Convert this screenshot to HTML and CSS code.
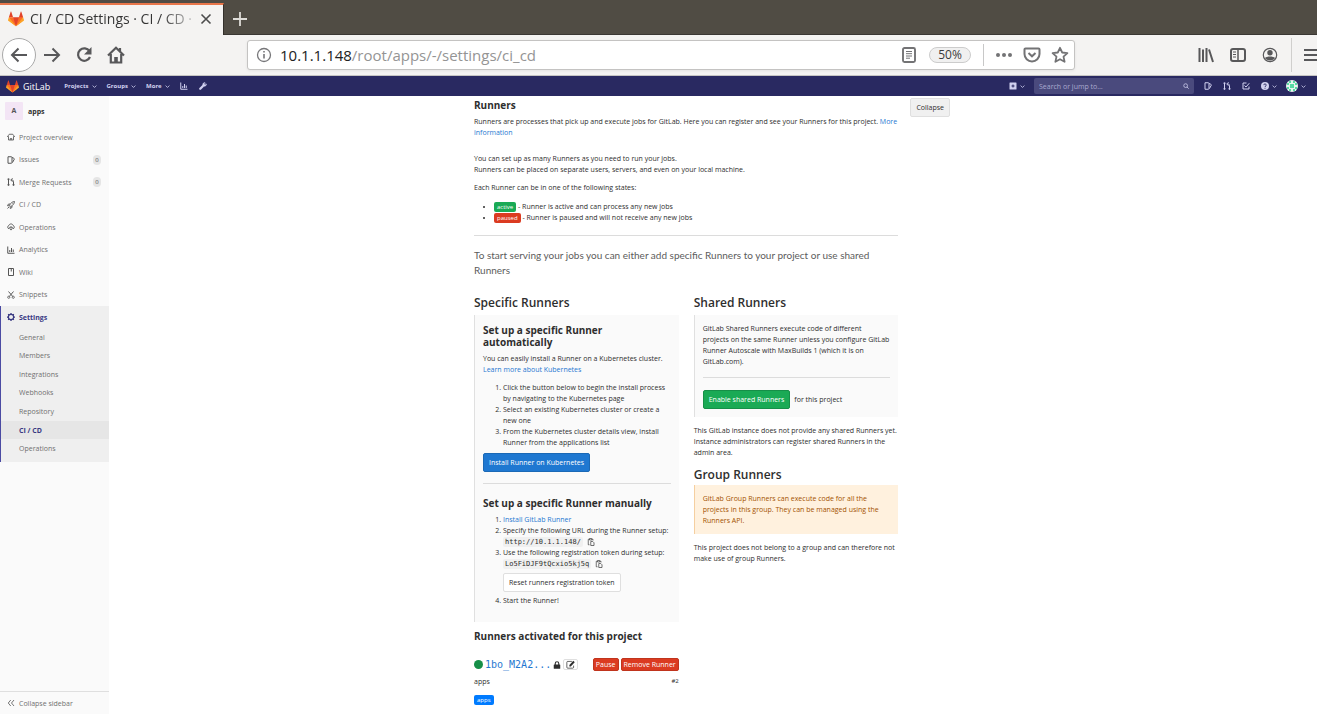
FILE: index.html
```html
<!DOCTYPE html>
<html lang="en">
<head>
<meta charset="utf-8">
<title>CI / CD Settings · CI / CD · GitLab</title>
<link rel="stylesheet" href="styles.css">
</head>
<body>
<svg class="sprite" aria-hidden="true">
  <symbol id="tanuki" viewBox="0 0 36 36">
    <path fill="#e24329" d="M2 14l9.38 9v-9l-4-12.28c-.2-.63-1.18-.63-1.38 0zM34 14l-9.38 9v-9l4-12.28c.2-.63 1.18-.63 1.38 0zM18 34.38L3 14h30z"/>
    <path fill="#fc6d26" d="M18 34.38L11.38 14H2l4 11zM18 34.38L24.62 14H34l-4 11z"/>
    <path fill="#fca326" d="M2 14L.1 20.16c-.18.56 0 1.2.5 1.56L18 34.38zM34 14l1.9 6.16c.18.56 0 1.2-.5 1.56L18 34.38z"/>
  </symbol>
  <symbol id="chevron" viewBox="0 0 16 16"><path d="M2 5l6 6 6-6" fill="none" stroke="currentColor" stroke-width="2.6"/></symbol>
  <symbol id="chart" viewBox="0 0 16 16"><path d="M1.500 1v13.500H15M5.500 12V8M9 12V4M12.500 12V7" fill="none" stroke="currentColor" stroke-width="2"/></symbol>
  <symbol id="wrench" viewBox="0 0 16 16"><path d="M2.500 13.500l6-6" fill="none" stroke="currentColor" stroke-width="4.500" stroke-linecap="round"/><path d="M13.500 2.500l-2.500 2.500M7.500 5.500C7.500 2.500 9.500 1 12 1l-2 3 2 2 3-2c0 2.500-1.500 4.500-4.500 4.500z" fill="currentColor" stroke="currentColor" stroke-width="1"/></symbol>
  <symbol id="search" viewBox="0 0 16 16"><circle cx="7" cy="7" r="5" fill="none" stroke="currentColor" stroke-width="2"/><path d="M11 11l4 4" stroke="currentColor" stroke-width="2.400"/></symbol>
  <symbol id="issues" viewBox="0 0 16 16"><path d="M2 1.500h6.500a1.500 1.500 0 0 1 1.500 1.500v10a1.500 1.500 0 0 1-1.500 1.500H2zM10 3l3.500 1.500c1 .5 1.300 1 1 2L11 13" fill="none" stroke="currentColor" stroke-width="2"/></symbol>
  <symbol id="merge" viewBox="0 0 16 16"><path d="M3 3v12M13 15V7c0-2-1-3-4-3M11 .5L7.500 4 11 7.500" fill="none" stroke="currentColor" stroke-width="2"/><circle cx="3" cy="2.500" r="2" fill="currentColor"/><circle cx="3" cy="13.500" r="2" fill="currentColor"/><circle cx="13" cy="13.500" r="2" fill="currentColor"/></symbol>
  <symbol id="todo" viewBox="0 0 16 16"><path d="M9 2H2v12h12V9M5 7l3 3 6.500-7.500" fill="none" stroke="currentColor" stroke-width="2"/></symbol>
  <symbol id="help" viewBox="0 0 16 16"><circle cx="8" cy="8" r="8" fill="currentColor"/><path d="M5.500 6.200C5.500 3 10.500 3 10.500 6.200 10.500 8 8 8 8 10M8 11.500v2" fill="none" stroke="#292961" stroke-width="1.800"/></symbol>
  <symbol id="plus-square" viewBox="0 0 16 16"><path fill="currentColor" fill-rule="evenodd" d="M2 1h12a1 1 0 0 1 1 1v12a1 1 0 0 1-1 1H2a1 1 0 0 1-1-1V2a1 1 0 0 1 1-1zm5 4v2H5v2h2v2h2V9h2V7H9V5z"/></symbol>
  <symbol id="home" viewBox="0 0 16 16"><path d="M.5 8L3 4.500 4.500 2.500h7L13 4.500 15.500 8M3 6.500v7.500h10V6.500M6.500 14v-3h3v3" fill="none" stroke="currentColor" stroke-width="1.700"/></symbol>
  <symbol id="rocket" viewBox="0 0 16 16"><path d="M5 8.500C7 4 10.500 1.500 15 1c-.5 4.500-3 8-7.500 10zM6 6H3L1 9.500h4M10 10v3L6.500 15v-4M4.500 11.500L1 15" fill="none" stroke="currentColor" stroke-width="1.800"/><circle cx="10.500" cy="5.500" r="1" fill="currentColor"/></symbol>
  <symbol id="cloud" viewBox="0 0 16 16"><path d="M4 11.500a3.300 3.300 0 0 1-.5-6.300C5 .8 11 .8 12.500 5.200a3.300 3.300 0 0 1-.5 6.300" fill="none" stroke="currentColor" stroke-width="1.800"/><circle cx="8" cy="10.500" r="2.500" fill="none" stroke="currentColor" stroke-width="1.800"/><path d="M8 6.500v2M8 12.500v2M4.500 8.500l1.500 1M11.500 8.500l-1.500 1" stroke="currentColor" stroke-width="1.500"/></symbol>
  <symbol id="book" viewBox="0 0 16 16"><path d="M3 1h10v14H3zM8.500 1v6" fill="none" stroke="currentColor" stroke-width="2"/></symbol>
  <symbol id="scissors" viewBox="0 0 16 16"><path d="M3 1l8.500 10M13 1L4.500 11" fill="none" stroke="currentColor" stroke-width="1.900"/><circle cx="3.500" cy="12.500" r="2.200" fill="none" stroke="currentColor" stroke-width="1.600"/><circle cx="12.500" cy="12.500" r="2.200" fill="none" stroke="currentColor" stroke-width="1.600"/></symbol>
  <symbol id="gear" viewBox="0 0 16 16"><circle cx="8" cy="8" r="5.200" fill="none" stroke="currentColor" stroke-width="2.200"/><path d="M8 0v3M8 13v3M0 8h3M13 8h3M2.300 2.300l2.200 2.200M11.500 11.500l2.200 2.200M2.300 13.700l2.200-2.200M11.500 4.500l2.200-2.200" stroke="currentColor" stroke-width="2.500"/></symbol>
  <symbol id="collapse" viewBox="0 0 16 16"><path d="M7.500 2L2.500 8l5 6M14 2L9 8l5 6" fill="none" stroke="currentColor" stroke-width="1.900"/></symbol>
  <symbol id="copy" viewBox="0 0 16 16"><path d="M5 13.500H2.500v-11H5M9.500 2.500H12V5M5 1h4.500v3H5zM7.500 7h4l2.500 2.500V15H7.500z" fill="none" stroke="currentColor" stroke-width="1.500"/></symbol>
  <symbol id="lock" viewBox="0 0 16 16"><path d="M4.500 8V5a3.500 3.500 0 0 1 7 0v3" fill="none" stroke="currentColor" stroke-width="2.200"/><rect x="1.500" y="7" width="13" height="8.500" rx="1" fill="currentColor"/></symbol>
  <symbol id="edit" viewBox="0 0 16 16"><path d="M10.500 2.500H3A1.500 1.500 0 0 0 1.500 4v9A1.500 1.500 0 0 0 3 14.500h9a1.500 1.500 0 0 0 1.500-1.500v-3" fill="none" stroke="currentColor" stroke-width="1.300"/><path d="M6 11.500V9l7-7.500L15.500 4l-7 7.500z" fill="currentColor"/></symbol>
</svg>

<header class="browser">
  <div class="tabs">
    <div class="tab">
      <svg class="favicon"><use href="#tanuki"/></svg>
      <span class="tab-title">CI / CD Settings · CI / CD ·</span>
      <button class="bare" aria-label="Close tab"><svg class="i12" viewBox="0 0 12 12"><path d="M1.500 1.500l9 9M10.500 1.500l-9 9" stroke="#4c4c4c" stroke-width="1.600"/></svg></button>
    </div>
    <button class="bare new-tab" aria-label="New tab"><svg class="i14" viewBox="0 0 14 14"><path d="M7 0v14M0 7h14" stroke="#dedcd8" stroke-width="1.800"/></svg></button>
  </div>
  <div class="toolbar">
    <div class="nav-buttons">
      <button class="bare back" aria-label="Back"><svg class="i18" viewBox="0 0 18 18"><path d="M17 9H2M8.500 2.500L2 9l6.500 6.500" fill="none" stroke="#58585a" stroke-width="2"/></svg></button>
      <button class="bare" aria-label="Forward"><svg class="i18" viewBox="0 0 18 18"><path d="M1 9h15M9.500 2.500L16 9l-6.500 6.500" fill="none" stroke="#58585a" stroke-width="2"/></svg></button>
      <button class="bare" aria-label="Reload"><svg class="i18" viewBox="0 0 18 18"><path d="M14.500 5.200A6.200 6.200 0 1 0 15 11" fill="none" stroke="#58585a" stroke-width="2.200"/><path d="M16.500 1v7.500H9z" fill="#58585a"/></svg></button>
      <button class="bare" aria-label="Home"><svg class="i18" viewBox="0 0 18 18"><path d="M1 9.500L9 1.800l8 7.700M3.800 8v8.500h10.400V8M13 2v4" fill="none" stroke="#58585a" stroke-width="2.200"/><path d="M7.200 16v-5h3.600v5z" fill="#58585a"/></svg></button>
    </div>
    <div class="address">
      <svg class="i16" viewBox="0 0 16 16"><circle cx="8" cy="8" r="6.500" fill="none" stroke="#77777a" stroke-width="1.300"/><path d="M8 7v4.500M8 4v1.600" stroke="#77777a" stroke-width="1.600"/></svg>
      <div class="url" role="textbox" contenteditable="true" spellcheck="false" aria-label="Address"><b>10.1.1.148</b>/root/apps/-/settings/ci_cd</div>
      <button class="bare" aria-label="Reader view"><svg class="i16" viewBox="0 0 16 16"><rect x="2" y="1" width="12" height="14" rx="1.500" fill="none" stroke="#737375" stroke-width="1.900"/><path d="M5 4.500h6M5 6.700h6M5 9h6M5 11.200h4" stroke="#737375"/></svg></button>
      <button class="zoom">50%</button>
      <span class="divider"></span>
      <button class="bare" aria-label="Page actions"><svg class="i18" viewBox="0 0 18 18"><g fill="#737375"><circle cx="3" cy="9" r="2"/><circle cx="9" cy="9" r="2"/><circle cx="15" cy="9" r="2"/></g></svg></button>
      <button class="bare" aria-label="Save to Pocket"><svg class="i18" viewBox="0 0 18 18"><path d="M2.500 2.500h13a1 1 0 0 1 1 1V8a7.500 7.500 0 0 1-15 0V3.500a1 1 0 0 1 1-1zM5.500 7L9 10.300 12.500 7" fill="none" stroke="#737375" stroke-width="2"/></svg></button>
      <button class="bare" aria-label="Bookmark"><svg class="i18" viewBox="0 0 18 18"><path d="M9 1.800l2.200 4.700 5.200.6-3.900 3.500 1.100 5.200L9 13.200l-4.600 2.600 1.100-5.200L1.600 7.100l5.200-.6z" fill="none" stroke="#737375" stroke-width="1.800" stroke-linejoin="round"/></svg></button>
    </div>
    <div class="tools">
      <button class="bare" aria-label="Library"><svg class="i16" viewBox="0 0 16 16"><path d="M1.500 1v14M5 2.500V15M8.500 1v14M11 2.500L15 15" stroke="#58585a" stroke-width="2"/></svg></button>
      <button class="bare" aria-label="Sidebars"><svg class="i16" viewBox="0 0 16 16"><rect x="1" y="2" width="14" height="12" rx="2" fill="none" stroke="#58585a" stroke-width="2"/><path d="M8 2v12" stroke="#58585a" stroke-width="1.500"/><path d="M3 5h3M3 7.500h3M3 10h3" stroke="#58585a"/></svg></button>
      <button class="bare" aria-label="Account"><svg class="i16" viewBox="0 0 16 16"><circle cx="8" cy="8" r="6.700" fill="none" stroke="#58585a" stroke-width="1.200"/><circle cx="8" cy="5.800" r="2.700" fill="#58585a"/><path d="M3 11c1.500-2 8.500-2 10 0-1.500 3.200-8.500 3.200-10 0z" fill="#58585a"/></svg></button>
      <span class="tool-divider"></span>
      <button class="bare menu" aria-label="Menu"><svg class="i16" viewBox="0 0 16 16"><path d="M0 3h16M0 8h16M0 13h16" stroke="#58585a" stroke-width="2"/></svg></button>
    </div>
  </div>
</header>

<nav class="navbar">
  <a class="brand" href="#"><svg><use href="#tanuki"/></svg>GitLab</a>
  <button class="nav-item">Projects <svg><use href="#chevron"/></svg></button>
  <button class="nav-item">Groups <svg><use href="#chevron"/></svg></button>
  <button class="nav-item">More <svg><use href="#chevron"/></svg></button>
  <a class="nav-icon" href="#" aria-label="Analytics"><svg><use href="#chart"/></svg></a>
  <a class="nav-icon wrench" href="#" aria-label="Admin area"><svg><use href="#wrench"/></svg></a>
  <div class="nav-right">
    <button class="nav-drop" aria-label="New"><svg><use href="#plus-square"/></svg><svg class="caret"><use href="#chevron"/></svg></button>
    <label class="search"><input type="text" placeholder="Search or jump to…" aria-label="Search"><svg><use href="#search"/></svg></label>
    <a class="nav-icon" href="#" aria-label="Issues"><svg><use href="#issues"/></svg></a>
    <a class="nav-icon" href="#" aria-label="Merge requests"><svg><use href="#merge"/></svg></a>
    <a class="nav-icon" href="#" aria-label="To-Do List"><svg><use href="#todo"/></svg></a>
    <button class="nav-drop" aria-label="Help"><svg><use href="#help"/></svg><svg class="caret"><use href="#chevron"/></svg></button>
    <button class="nav-drop user" aria-label="User menu"><svg class="avatar" viewBox="0 0 12 12"><circle cx="6" cy="6" r="6" fill="#e8f4ef"/><path d="M3 1h2v2H3zM7 1h2v2H7zM1 3h2v2H1zM9 3h2v2H9zM4 4h4v4H4zM1 7h2v2H1zM9 7h2v2H9zM3 9h2v2H3zM7 9h2v2H7z" fill="#57d9a3"/></svg><svg class="caret"><use href="#chevron"/></svg></button>
  </div>
</nav>

<div class="page">
  <aside class="sidebar">
    <a class="project" href="#"><span class="project-avatar">A</span>apps</a>
    <ul class="menu-list">
      <li><a href="#"><svg><use href="#home"/></svg>Project overview</a></li>
      <li><a href="#"><svg><use href="#issues"/></svg>Issues<span class="count">0</span></a></li>
      <li><a href="#"><svg><use href="#merge"/></svg>Merge Requests<span class="count">0</span></a></li>
      <li><a href="#"><svg><use href="#rocket"/></svg>CI / CD</a></li>
      <li><a href="#"><svg><use href="#cloud"/></svg>Operations</a></li>
      <li><a href="#"><svg><use href="#chart"/></svg>Analytics</a></li>
      <li><a href="#"><svg><use href="#book"/></svg>Wiki</a></li>
      <li><a href="#"><svg><use href="#scissors"/></svg>Snippets</a></li>
    </ul>
    <div class="settings">
      <a class="settings-title" href="#"><svg><use href="#gear"/></svg>Settings</a>
      <ul class="submenu">
        <li><a href="#">General</a></li>
        <li><a href="#">Members</a></li>
        <li><a href="#">Integrations</a></li>
        <li><a href="#">Webhooks</a></li>
        <li><a href="#">Repository</a></li>
        <li><a class="current" href="#">CI / CD</a></li>
        <li><a href="#">Operations</a></li>
      </ul>
    </div>
    <button class="collapse-sidebar"><svg><use href="#collapse"/></svg>Collapse sidebar</button>
  </aside>

  <main class="content">
    <section class="runners">
      <h2>Runners</h2>
      <p class="intro">Runners are processes that pick up and execute jobs for GitLab. Here you can register and see your Runners for this project. <a href="#">More information</a></p>
      <p>You can set up as many Runners as you need to run your jobs.<br>Runners can be placed on separate users, servers, and even on your local machine.</p>
      <p>Each Runner can be in one of the following states:</p>
      <ul class="states">
        <li><span class="badge green">active</span> - Runner is active and can process any new jobs</li>
        <li><span class="badge red">paused</span> - Runner is paused and will not receive any new jobs</li>
      </ul>
      <hr>
      <p class="lead">To start serving your jobs you can either add specific Runners to your project or use shared Runners</p>
      <div class="columns">
        <div class="column">
          <h3>Specific Runners</h3>
          <div class="well specific">
            <h4>Set up a specific Runner automatically</h4>
            <p>You can easily install a Runner on a Kubernetes cluster. <a href="#">Learn more about Kubernetes</a></p>
            <ol>
              <li>Click the button below to begin the install process by navigating to the Kubernetes page</li>
              <li>Select an existing Kubernetes cluster or create a new one</li>
              <li>From the Kubernetes cluster details view, install Runner from the applications list</li>
            </ol>
            <button class="btn blue">Install Runner on Kubernetes</button>
            <hr>
            <h4>Set up a specific Runner manually</h4>
            <ol class="manual">
              <li><a href="#">Install GitLab Runner</a></li>
              <li>Specify the following URL during the Runner setup: <code>http://10.1.1.148/</code><button class="bare copy" aria-label="Copy URL"><svg><use href="#copy"/></svg></button></li>
              <li>Use the following registration token during setup: <code>Lo5FiDJF9tQcxio5kj5q</code><button class="bare copy" aria-label="Copy token"><svg><use href="#copy"/></svg></button><br>
                <button class="btn reset">Reset runners registration token</button></li>
              <li>Start the Runner!</li>
            </ol>
          </div>
          <h4 class="activated">Runners activated for this project</h4>
          <div class="runner">
            <span class="status"></span>
            <a class="token" href="#">1bo_M2A2...</a>
            <svg class="lock"><use href="#lock"/></svg>
            <button class="edit" aria-label="Edit runner"><svg><use href="#edit"/></svg></button>
            <span class="runner-actions">
              <button class="btn small danger">Pause</button>
              <button class="btn small danger">Remove Runner</button>
            </span>
          </div>
          <div class="runner-meta"><span>apps</span><small>#2</small></div>
          <span class="badge tag">apps</span>
        </div>
        <div class="column">
          <h3>Shared Runners</h3>
          <div class="well">
            <p class="lines">GitLab Shared Runners execute code of different<br>projects on the same Runner unless you configure GitLab<br>Runner Autoscale with MaxBuilds 1 (which it is on<br>GitLab.com).</p>
            <hr>
            <div class="enable"><button class="btn success">Enable shared Runners</button>for this project</div>
          </div>
          <p class="note">This GitLab instance does not provide any shared Runners yet. Instance administrators can register shared Runners in the admin area.</p>
          <h3 class="group-title">Group Runners</h3>
          <div class="well warning"><p>GitLab Group Runners can execute code for all the projects in this group. They can be managed using the Runners API.</p></div>
          <p class="note">This project does not belong to a group and can therefore not make use of group Runners.</p>
        </div>
      </div>
    </section>
    <button class="btn collapse">Collapse</button>
  </main>
</div>
</body>
</html>
```
FILE: styles.css
```css
* { box-sizing: border-box; }
body {
  margin: 0;
  min-height: 100vh;
  display: flex;
  flex-direction: column;
  font: 7px/11px "Open Sans", sans-serif;
  color: #2e2e2e;
  background: #fff;
}
ul, ol, p, h2, h3, h4 { margin: 0; padding: 0; }
button, input { font: inherit; color: inherit; }
a { color: #1f78d1; text-decoration: none; }
svg { display: block; flex: none; }
.sprite { display: none; }
.bare { display: flex; padding: 0; border: 0; background: none; }
.i12 { width: 12px; height: 12px; }
.i14 { width: 14px; height: 14px; }
.i16 { width: 16px; height: 16px; }
.i18 { width: 18px; height: 18px; }

/* Browser window */
.browser { font-size: 15px; line-height: 20px; }
.tabs { display: flex; align-items: center; height: 35px; padding-top: 3px; background: #504c44; border-bottom: 1px solid #3a3733; }
.tab {
  display: flex;
  align-items: center;
  width: 224px;
  height: 32px;
  margin-bottom: -1px;
  padding: 0 11px 2px 8px;
  border-top: 2px solid #e8764a;
  border-right: 1px solid #33302b;
  background: #f4f3f2;
}
.favicon { width: 16px; height: 16px; margin-right: 6px; }
.tab-title {
  flex: 1;
  overflow: hidden;
  white-space: nowrap;
  font-size: 14px;
  color: transparent;
  background: linear-gradient(90deg, #333 80%, #ccc);
  background-clip: text;
}
.tab .bare { margin-left: 6px; }
.new-tab { margin-left: 9px; }
.toolbar { display: flex; align-items: center; height: 41px; background: #f4f3f2; border-bottom: 1px solid #c6c5c3; }
.nav-buttons { display: flex; align-items: center; gap: 14px; flex: 0 0 247px; padding-left: 2px; }
.back { width: 34px; height: 34px; margin-right: -7px; border: 1px solid #a9a9a9; border-radius: 50%; background: #fff; align-items: center; justify-content: center; }
.address {
  display: flex;
  align-items: center;
  flex: 1;
  height: 30px;
  padding: 0 5px 0 8px;
  border: 1px solid #c4c3c2;
  border-radius: 3px;
  background: #fff;
  box-shadow: 0 1px 3px #0001;
}
.url { flex: 1; margin-left: 8px; color: #949494; outline: 0; white-space: nowrap; }
.url b { font-weight: 400; color: #222; }
.zoom { width: 42px; height: 16px; margin: 0 12px; padding: 0; border: 1px solid #ccc; border-radius: 8px; background: #f0f0f0; color: #3c3c3c; font-size: 12px; line-height: 14px; }
.divider { width: 1px; height: 22px; margin-right: 11px; background: #c8c8c8; }
.address .bare + .bare { margin-left: 10px; }
.tools { display: flex; align-items: center; gap: 16px; width: 242px; padding-left: 123px; overflow: hidden; }
.tools .bare { flex: none; }
.tool-divider { flex: none; width: 1px; height: 34px; margin: 0 -4px 0 -3px; background: #d0cfcd; }

/* GitLab top bar */
.navbar { display: flex; align-items: center; height: 20px; padding: 0 11px 0 6px; background: #292961; color: #d1d1f0; }
.navbar svg { width: 8px; height: 8px; }
.brand { display: flex; align-items: center; gap: 4px; margin-right: 14px; color: #fff; font-size: 9px; }
.navbar .brand svg { width: 13px; height: 13px; }
.nav-item { display: flex; align-items: center; gap: 3px; margin-right: 10px; padding: 0; border: 0; background: none; font-size: 6px; font-weight: 700; }
.navbar .nav-item svg, .navbar .caret { width: 5px; height: 5px; }
.nav-icon { color: inherit; }
.wrench { margin-left: 11px; }
.nav-right { display: flex; align-items: center; gap: 11px; margin-left: auto; }
.nav-drop { display: flex; align-items: center; gap: 3px; padding: 0; border: 0; background: none; }
.navbar .avatar { width: 12px; height: 12px; }
.user { margin-left: -2px; }
.search { display: flex; align-items: center; width: 160px; height: 16px; margin: 0 -1px 0 -2px; padding: 0 5px; border-radius: 2px; background: #4a4a7d; }
.search input { flex: 1; min-width: 0; padding: 0; border: 0; outline: 0; background: none; }
.search input::placeholder { color: #a9a9cf; opacity: 1; }
.navbar .search svg { width: 6px; height: 6px; }

/* Sidebar */
.page { display: flex; flex: 1; }
.sidebar { display: flex; flex-direction: column; flex: 0 0 109px; background: #fafafa; color: #707070; }
.sidebar a { color: inherit; }
.sidebar ul { list-style: none; }
.sidebar svg { width: 8px; height: 8px; }
.project { display: flex; align-items: center; gap: 5px; padding: 6px 5px; font-weight: 700; }
.sidebar .project { color: #2e2e2e; }
.project-avatar { width: 18px; height: 18px; border-radius: 1px; background: #f3e5f5; color: #555; line-height: 18px; text-align: center; }
.menu-list { display: grid; grid-auto-rows: 1fr; min-height: 180px; }
.menu-list a { display: flex; align-items: center; gap: 4px; height: 100%; padding: 0 8px 0 7px; }
.menu-list svg { color: #555; }
.count { min-width: 8px; margin-left: auto; border-radius: 5px; background: #e5e5e5; color: #555; font-size: 6px; line-height: 10px; text-align: center; }
.settings { padding-bottom: 4px; border-left: 1px solid #4b4ba3; background: #efefef; }
.settings-title { display: flex; align-items: center; gap: 4px; height: 22px; padding-left: 6px; font-weight: 700; }
.sidebar .settings-title, .sidebar .current { color: #393982; font-weight: 700; }
.submenu { display: grid; grid-auto-rows: 1fr; min-height: 130px; }
.submenu a { display: flex; align-items: center; height: 100%; padding-left: 18px; }
.submenu .current { background: #e6e6e6; }
.collapse-sidebar { display: flex; align-items: center; gap: 4px; height: 23px; margin-top: auto; padding: 0 7px; border: 0; border-top: 1px solid #dfdfdf; background: none; }

/* Settings content */
.content { display: flex; align-items: flex-start; gap: 12px; flex: 0 1 478px; min-width: 0; margin: 0 auto; padding: 2px 2px 8px 0; }
.runners { flex: 1; min-width: 0; }
h2 { font-size: 10px; line-height: 14px; font-weight: 700; }
h3 { margin-bottom: 4px; font-size: 12px; line-height: 16px; font-weight: 600; }
h4 { font-size: 10px; line-height: 12px; font-weight: 700; }
p { margin-bottom: 7px; }
hr { height: 1px; margin: 12px 0; border: 0; background: #dcdcdc; }
.intro { margin: 4px 0 15px; }
.states { margin: 8px 0 12px; padding-left: 20px; }
.badge { display: inline-block; padding: 0 3px; border-radius: 2px; color: #fff; font-size: 6px; line-height: 10px; }
.green { background: #1aaa55; }
.red { background: #db3b21; }
.lead { margin-bottom: 17px; color: #5c5c5c; font: 10px/15px Lato, sans-serif; }
.columns { display: grid; grid-template-columns: 1fr 1fr; gap: 15px; }
.column { min-width: 0; }
.well { padding: 8px; border-left: 1px solid #e0e0e0; background: #fafafa; }
.well > p:last-child { margin-bottom: 0; }
.well hr { margin-top: 10px; }
.well h4 { margin-bottom: 5px; }
.specific { padding-top: 9px; }
.specific hr { margin: 11px 0 13px; }
.lines { white-space: nowrap; }
ol { margin-bottom: 5px; padding-left: 20px; }
.manual { margin-bottom: 8px; }
.btn { padding: 3px 5px; border: 1px solid #dfdfdf; border-radius: 2px; background: #fff; line-height: 11px; white-space: nowrap; }
.blue { border-color: #1b69b6; background: #1f78d1; color: #fff; }
.success { border-color: #168f48; background: #1aaa55; color: #fff; }
.danger { border-color: #c0341d; background: #db3b21; color: #fff; }
.collapse { background: #f0f0f0; }
code { padding: 1px 2px; border-radius: 2px; background: #f0f0f0; font: 7px "DejaVu Sans Mono", monospace; }
.copy { display: inline-flex; margin-left: 4px; vertical-align: middle; color: #444; }
.copy svg { width: 8px; height: 8px; }
.reset { margin: 4px 0 3px; }
.activated { margin: 8px 0 16px; }
.runner { display: flex; align-items: center; gap: 2px; height: 13px; }
.status { width: 9px; height: 9px; border-radius: 50%; background: #168f48; }
.token { font: 10px/13px "DejaVu Sans Mono", monospace; }
.lock { width: 8px; height: 8px; }
.edit { display: flex; padding: 0 2px; border: 1px solid #dfdfdf; border-radius: 2px; background: #fff; }
.edit svg { width: 9px; height: 9px; }
.runner-actions { display: flex; gap: 2px; margin-left: auto; }
.small { padding: 0 2px; }
.runner-meta { display: flex; justify-content: space-between; margin: 5px 0 8px; }
.runner-meta small { font-size: 6px; }
.tag { display: table; background: #007bff; }
.enable { display: flex; align-items: center; gap: 4px; }
.note { margin: 8px 0; }
.group-title { margin: 9px 0 2px; }
.warning { border-color: #f5cfa0; background: #fff1de; color: #a35200; }
```
